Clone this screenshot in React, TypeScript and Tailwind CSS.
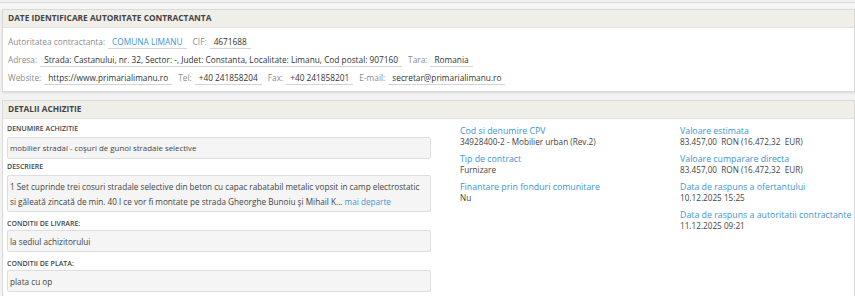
import React from 'react'

const font = { fontFamily: '"Open Sans", "Noto Sans", sans-serif' }

function Field({ label, value, blue }: { label: string; value: string; blue?: boolean }) {
    return (
        <span className="inline-flex items-center mr-[6px]">
            <span className="text-[#8c8c8c] mr-[3px]">{label}</span>
            <span className={'border-b border-[#d4d4d4] px-[4px] leading-[12px] ' + (blue ? 'text-[#3d95d3]' : 'text-[#333]')}>{value}</span>
        </span>
    )
}

function Box({ label, children, mt, mb, size }: { label: string; children: React.ReactNode; mt: string; mb: string; size?: string }) {
    return (
        <div className={mt}>
            <div className={'text-[7px] font-semibold text-[#444] uppercase leading-[10px] ' + mb}>{label}</div>
            <div className={'bg-[#f5f5f5] border border-[#dedede] rounded-[2px] pl-[2px] pr-[1px] py-[2.5px] leading-[15px] text-[#444] whitespace-nowrap ' + (size || 'text-[8.2px]')}>
                {children}
            </div>
        </div>
    )
}

function Info({ title, value }: { title: string; value: string }) {
    return (
        <div className="mb-[7px]">
            <div className="text-[8.8px] leading-[11px] text-[#3d95d3] whitespace-nowrap">{title}</div>
            <div className="text-[8.2px] leading-[10px] text-[#444] whitespace-pre">{value}</div>
        </div>
    )
}

export default function App() {
    return (
        <div className="w-[855px] h-[296px] overflow-hidden bg-[#f2f2f2]" style={font}>
            <div className="h-[3px] bg-[#f0f0f0] border-b border-[#d9d9d9]" />
            <div className="h-[6px] bg-[#f5f5f5]" />
            <div className="ml-[2px] border border-[#dadada] bg-white shadow-[0_1px_2px_rgba(0,0,0,0.1)]">
                <div className="h-[18px] bg-[#efeee9] border-b border-[#e2e1dc] px-[5px] flex items-center text-[8.3px] font-bold text-[#444]">
                    DATE IDENTIFICARE AUTORITATE CONTRACTANTA
                </div>
                <div className="px-[5px] pt-[5px] pb-[4px] text-[8.3px]">
                    <div className="h-[18px] flex items-center">
                        <Field label="Autoritatea contractanta:" value="COMUNA LIMANU" blue />
                        <Field label="CIF:" value="4671688" />
                    </div>
                    <div className="h-[18px] flex items-center">
                        <Field label="Adresa:" value="Strada: Castanului, nr. 32, Sector: -, Judet: Constanta, Localitate: Limanu, Cod postal: 907160" />
                        <Field label="Tara:" value="Romania" />
                    </div>
                    <div className="h-[18px] flex items-center">
                        <Field label="Website:" value="https://www.primarialimanu.ro" />
                        <Field label="Tel:" value="+40 241858204" />
                        <Field label="Fax:" value="+40 241858201" />
                        <Field label="E-mail:" value="secretar@primarialimanu.ro" />
                    </div>
                </div>
            </div>
            <div className="h-[8px]" />
            <div className="ml-[2px] border border-[#dadada] bg-white">
                <div className="h-[18px] bg-[#efeee9] border-b border-[#e2e1dc] px-[5px] flex items-center text-[8.3px] font-bold text-[#444]">
                    DETALII ACHIZITIE
                </div>
                <div className="flex pl-[4px]">
                    <div className="w-[424px] shrink-0 pt-[5px] pb-[6px]">
                        <Box label="Denumire achizitie" mt="" mb="mb-[3px]" size="text-[7.9px]">mobilier stradal - coşuri de gunoi stradale selective</Box>
                        <Box label="Descriere" mt="mt-[3px]" mb="mb-[3px]">
                            1 Set cuprinde trei cosuri stradale selective din beton cu capac rabatabil metalic vopsit in camp electrostatic
                            <br />
                            si găleată zincată de min. 40 l ce vor fi montate pe strada Gheorghe Bunoiu şi Mihail K... <span className="text-[#3d95d3]">mai departe</span>
                        </Box>
                        <Box label="Conditii de livrare:" mt="mt-[7px]" mb="mb-[1px]">la sediul achizitorului</Box>
                        <Box label="Conditii de plata:" mt="mt-[7px]" mb="mb-[1px]">plata cu op</Box>
                    </div>
                    <div className="w-[249px] shrink-0 pl-[29px] pt-[7px]">
                        <Info title="Cod si denumire CPV" value="34928400-2 - Mobilier urban (Rev.2)" />
                        <Info title="Tip de contract" value="Furnizare" />
                        <Info title="Finantare prin fonduri comunitare" value="Nu" />
                    </div>
                    <div className="flex-1 pt-[7px]">
                        <Info title="Valoare estimata" value="83.457,00  RON (16.472,32  EUR)" />
                        <Info title="Valoare cumparare directa" value="83.457,00  RON (16.472,32  EUR)" />
                        <Info title="Data de raspuns a ofertantului" value="10.12.2025 15:25" />
                        <Info title="Data de raspuns a autoritatii contractante" value="11.12.2025 09:21" />
                    </div>
                </div>
            </div>
        </div>
    )
}
